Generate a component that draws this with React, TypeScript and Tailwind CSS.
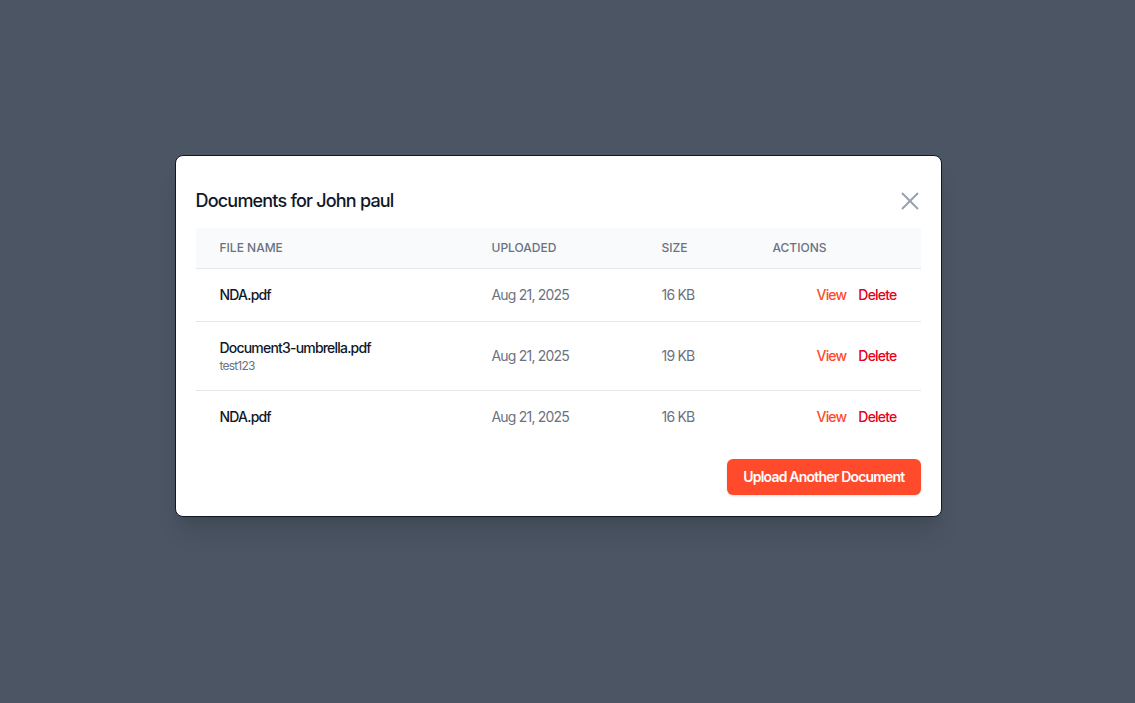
import { X } from 'lucide-react'

const docs = [
  { name: 'NDA.pdf', note: '', uploaded: 'Aug 21, 2025', size: '16 KB' },
  { name: 'Document3-umbrella.pdf', note: 'test123', uploaded: 'Aug 21, 2025', size: '19 KB' },
  { name: 'NDA.pdf', note: '', uploaded: 'Aug 21, 2025', size: '16 KB' },
]

export default function App() {
  return (
    <div
      className="min-h-[703px] w-full bg-[#4b5563] flex items-start justify-center pt-[155px] pr-[19px] tracking-tighter"
      style={{ fontFamily: 'Inter, "Noto Sans", sans-serif' }}
    >
      <div className="w-[767px] bg-white rounded-lg border border-[#111827] shadow-xl px-5 pt-[26px] pb-[21px]">
        <div className="flex items-center justify-between h-[38px]">
          <h2 className="text-lg font-medium text-gray-900">Documents for John paul</h2>
          <button type="button" className="text-gray-400 -mr-[4px]">
            <X size={30} strokeWidth={1.5} />
          </button>
        </div>

        <table className="w-full mt-[8px] text-sm table-fixed">
          <thead className="bg-gray-50">
            <tr className="border-b border-gray-200">
              <th className="w-[272px] h-10 px-6 text-left text-xs font-medium tracking-normal text-gray-500 uppercase">File Name</th>
              <th className="w-[170px] px-6 text-left text-xs font-medium tracking-normal text-gray-500 uppercase">Uploaded</th>
              <th className="w-[111px] px-6 text-left text-xs font-medium tracking-normal text-gray-500 uppercase">Size</th>
              <th className="px-6 text-left text-xs font-medium tracking-normal text-gray-500 uppercase">Actions</th>
            </tr>
          </thead>
          <tbody>
            {docs.map((d, i) => (
              <tr key={i} className={i < docs.length - 1 ? 'border-b border-gray-200' : ''}>
                <td className="px-6 py-4">
                  <div className="font-medium text-gray-900">{d.name}</div>
                  {d.note && <div className="text-xs text-gray-500">{d.note}</div>}
                </td>
                <td className="px-6 py-4 text-gray-500">{d.uploaded}</td>
                <td className="px-6 py-4 text-gray-500">{d.size}</td>
                <td className="px-6 py-4 text-right font-medium">
                  <button type="button" className="text-[#ff4a2b] mr-3">View</button>
                  <button type="button" className="text-[#e8001c]">Delete</button>
                </td>
              </tr>
            ))}
          </tbody>
        </table>

        <div className="flex justify-end mt-4">
          <button
            type="button"
            className="px-4 py-2 rounded-md bg-[#ff4a2b] text-white text-sm font-semibold shadow-sm"
          >
            Upload Another Document
          </button>
        </div>
      </div>
    </div>
  )
}
